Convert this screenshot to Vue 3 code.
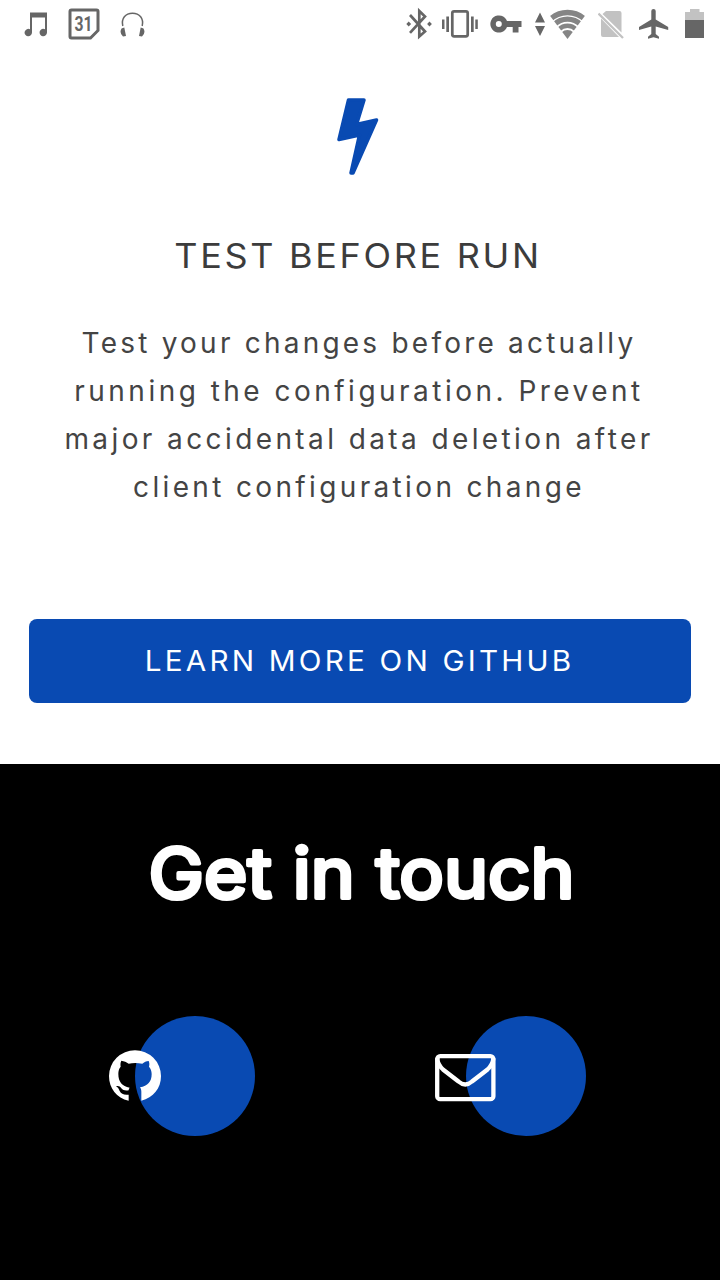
<script setup>
const lines = [
  { text: 'Test your changes before actually', cls: 'l1' },
  { text: 'running the configuration. Prevent', cls: 'l2' },
  { text: 'major accidental data deletion after', cls: 'l3' },
  { text: 'client configuration change', cls: 'l4' },
]
</script>

<template>
  <div class="page">
    <header class="status">
      <div class="group left">
        <svg width="24" height="48" viewBox="24 0 24 48"><path d="M30 12.500H47V32.500a3.700 3.700 0 1 1-2-3.300V17.500H32V32.500a3.700 3.700 0 1 1-2-3.200Z" fill="#666" /></svg>
        <svg width="32" height="48" viewBox="68 0 32 48">
          <path d="M71.500 10H96.500Q98 10 98 11.500V30.500L90.500 38H71.500Q70 38 70 36.500V11.500Q70 10 71.500 10Z" fill="none" stroke="#666" stroke-width="3" />
          <text x="83.500" y="30.500" text-anchor="middle" class="day" textLength="18" lengthAdjust="spacingAndGlyphs">31</text>
        </svg>
        <svg width="26" height="48" viewBox="120 0 26 48">
          <path d="M122.800 26C121 18.500 125.500 13.200 132.500 13.200S144 18.500 142.200 26" fill="none" stroke="#666" stroke-width="1.500" />
          <path d="M121.500 28.500L124.300 27.500L126 36L123 36.500Q119 33 121.500 28.500ZM143.500 28.500L140.700 27.500L139 36L142 36.500Q146 33 143.500 28.500Z" fill="#666" />
        </svg>
      </div>
      <div class="group right">
        <svg width="26" height="48" viewBox="406 0 26 48">
          <path d="M410 15L425 31.500L419.300 36.500V11L425 16.500L410 32.800" fill="none" stroke="#666" stroke-width="2.700" />
          <path d="M406.300 24l2.400-2.400 2.400 2.400-2.400 2.400ZM427.100 24l2.400-2.400 2.400 2.400-2.400 2.400Z" fill="#666" />
        </svg>
        <svg class="vibrate" width="36" height="48" viewBox="442 0 36 48">
          <rect x="452.300" y="11.300" width="15.400" height="25" rx="1.800" fill="none" stroke="#666" stroke-width="2.700" />
          <path d="M442 19.500h2.500V29H442ZM446.300 16.500h2.700V32h-2.700ZM471 16.500h2.700V32H471ZM475.300 19.500h2.500V29h-2.500Z" fill="#666" />
        </svg>
        <svg class="key" width="32" height="48" viewBox="490 0 32 48">
          <path fill-rule="evenodd" d="M507 21H521.500V27H518.500V32.500H512.700V27H507A8.600 8.600 0 1 1 507 21ZM498.800 21A3 3 0 1 0 498.800 27A3 3 0 1 0 498.800 21Z" fill="#666" />
        </svg>
        <svg class="arrows" width="11" height="48" viewBox="535 0 11 48"><path d="M540 12.500L545 22.500H535ZM535 26H545L540 36Z" fill="#666" /></svg>
        <svg class="wifi" width="35" height="48" viewBox="550 0 35 48">
          <defs><clipPath id="fan"><path d="M567.500 39L549 14.500V8H586V14.500Z" /></clipPath></defs>
          <g clip-path="url(#fan)" fill="none" stroke="#858585" stroke-width="5.300">
            <circle cx="567.500" cy="38" r="25.500" />
            <circle cx="567.500" cy="38" r="18.800" />
            <circle cx="567.500" cy="38" r="12.200" stroke-width="4.500" />
            <circle cx="567.500" cy="38" r="4" stroke-width="8" />
          </g>
        </svg>
        <svg class="sim" width="26" height="48" viewBox="598 0 26 48">
          <path d="M606 11H619.500Q621.500 11 621.500 13V32.500L602.500 14ZM601 18.500L619 37H603Q601 37 601 35Z" fill="#c2c2c2" />
          <path d="M598.500 13.500L623 38" stroke="#c2c2c2" stroke-width="2.300" />
        </svg>
        <svg class="plane" width="30" height="48" viewBox="639 0 30 48">
          <path d="M653.500 9Q655.700 9 655.700 11V19.500L668.200 27V30L655.700 26.500V34L659 36.700V38.700L653.500 37.200L648 38.700V36.700L651.300 34V26.500L639 30V27L651.300 19.500V11Q651.300 9 653.500 9Z" fill="#666" />
        </svg>
        <svg class="battery" width="19" height="48" viewBox="685 0 19 48">
          <path d="M685 12H690V9H699.500V12H704V20H685Z" fill="#c2c2c2" /><path d="M685 20H704V38H685Z" fill="#666" />
        </svg>
      </div>
    </header>

    <section class="feature">
      <svg class="bolt" width="44" height="80" viewBox="336 96.500 44 80">
        <path d="M348.500 99.500H364L356.500 124L376.500 119.500L353 172.500H351L359.500 134.500L339 139Z" fill="#094ab2" stroke="#094ab2" stroke-width="3.500" stroke-linejoin="round" />
      </svg>
      <h3><span>TEST BEFORE RUN</span></h3>
      <p><span v-for="l in lines" :key="l.cls" :class="l.cls">{{ l.text }}</span></p>
      <a class="button"><span>LEARN MORE ON GITHUB</span></a>
    </section>

    <footer>
      <svg class="heading" width="480" height="120" viewBox="0 0 480 120" role="heading">
        <text x="28.500" y="82.500" textLength="426" lengthAdjust="spacingAndGlyphs">Get in touch</text>
      </svg>
      <div class="contacts">
        <a class="dot">
          <svg class="github" width="54" height="54" viewBox="24 130 162 162">
            <path fill="#fff" d="M86 285C50 278 27 248 27 211A78 77 0 0 1 183 211C183 248 160 276 124 285L124 258C124 252 122 248 120 245C143 241 155 228 155 205C155 196 152 189 147 183C149 176 148 171 146 166C139 166 132 170 127 174Q105 170 86 174C80 169 72 166 64 165C61 171 61 177 62 183C57 189 55 196 55 205C55 228 66 242 89 246Q86 250 86 254C76 256 69 254 64 248C60 242 55 240 48 242C55 246 56 250 59 256C64 265 72 269 86 267Z" />
          </svg>
        </a>
        <a class="dot">
          <svg class="mail" width="62" height="50" viewBox="434 1053 62 50">
            <g fill="none" stroke="#fff" stroke-width="4.300">
              <rect x="437.200" y="1056.200" width="56.200" height="43" rx="3" />
              <path d="M437.200 1058C437.500 1063 439 1066 443 1069.500L458.500 1081.500Q465.300 1087.500 472 1081.500L487.500 1069.500C491.500 1066 493 1063 493.400 1058" />
            </g>
          </svg>
        </a>
      </div>
    </footer>
  </div>
</template>

<style>
body { margin: 0; }
</style>

<style scoped>
.page { width: 720px; height: 1280px; display: flex; flex-direction: column; overflow: hidden; background: #fff; font-family: Inter, "Liberation Sans", sans-serif; }
svg { display: block; flex: none; }
.status { height: 48px; display: flex; justify-content: space-between; padding: 0 16px 0 24px; }
.group { display: flex; }
.left { gap: 20px; }
.day { font: 700 20px Roboto, sans-serif; fill: #666; }
.vibrate { margin-left: 10px; }
.key { margin-left: 12px; }
.arrows { margin-left: 13px; }
.wifi { margin-left: 4px; }
.sim { margin-left: 13px; }
.plane { margin-left: 15px; }
.battery { margin-left: 16px; }
.feature { height: 716px; box-sizing: border-box; padding: 49px 29px 0; display: flex; flex-direction: column; align-items: center; }
.bolt { margin-right: 4px; }
h3 { margin: 55px 3px 0 0; height: 48px; line-height: 48px; font-size: 33.500px; font-weight: 400; letter-spacing: 2.500px; color: #3c3c3c; white-space: nowrap; }
h3 span, .button span { display: inline-block; transform: scaleX(1.074); }
.button span { transform: scaleX(1.06); }
p { margin: 39px 2px 0 0; display: flex; flex-direction: column; align-items: center; font-size: 28px; line-height: 48px; color: #444; white-space: nowrap; }
.l1 { letter-spacing: 3.220px; }
.l2 { letter-spacing: 3.480px; }
.l3 { letter-spacing: 3.400px; }
.l4 { letter-spacing: 3.350px; }
.button { margin-top: 108px; width: 662px; height: 84px; border-radius: 8px; background: #094ab2; color: #fff; display: flex; align-items: center; justify-content: center; font-size: 28px; letter-spacing: 3px; white-space: nowrap; }
footer { flex: 1; background: #000; padding: 51px 29px 0; display: flex; flex-direction: column; align-items: center; }
.heading text { font-family: Inter, sans-serif; font-size: 69px; font-weight: 400; fill: #fff; stroke: #fff; stroke-width: 4px; stroke-linejoin: round; }
.contacts { width: 100%; margin-top: 81px; display: grid; grid-template-columns: 1fr 1fr; justify-items: center; }
.dot { position: relative; width: 120px; height: 120px; border-radius: 50%; background: #094ab2; }
.github { position: absolute; left: -27px; top: 33px; }
.mail { position: absolute; left: -32px; top: 37px; }
</style>
